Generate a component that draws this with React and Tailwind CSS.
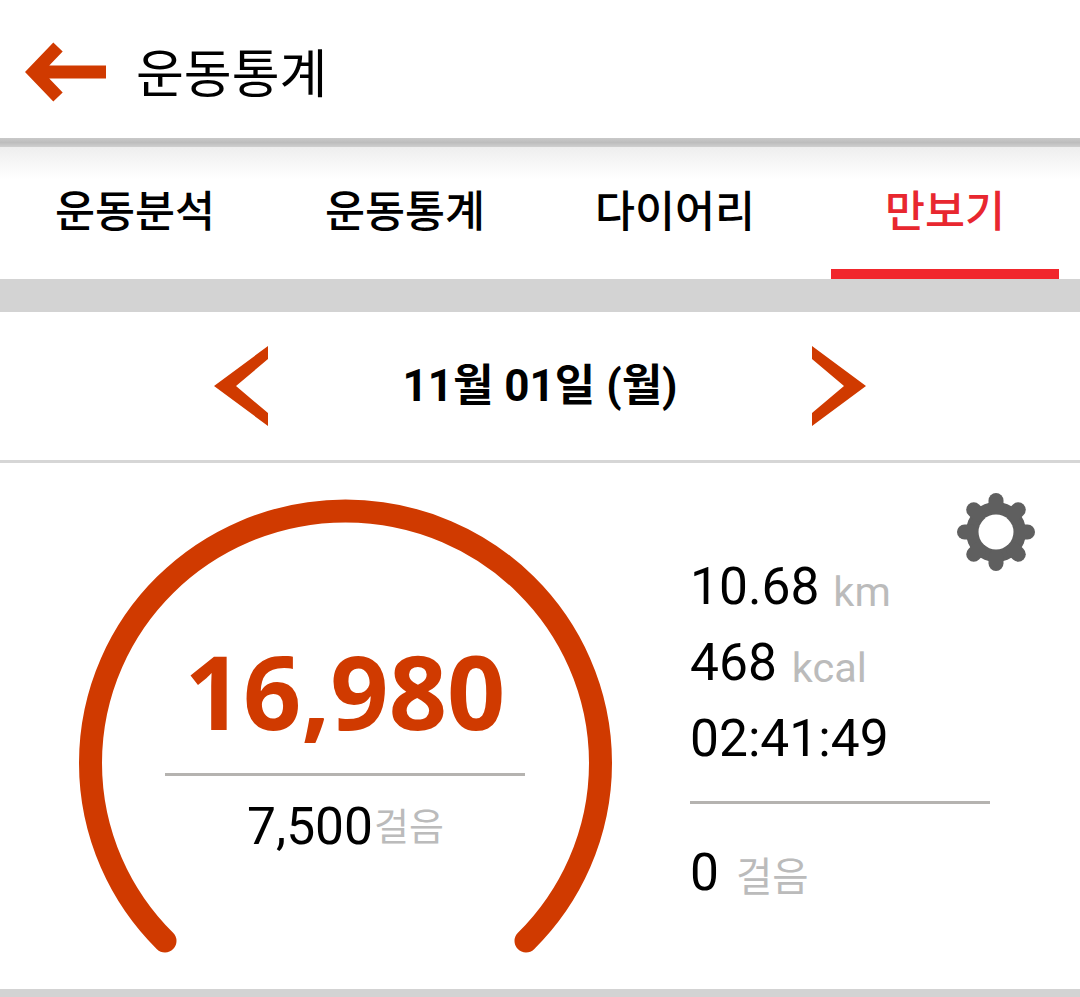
const kr = "font-['Roboto','Noto_Sans_CJK_KR',sans-serif]";

function BackArrow() {
  return (
    <svg width="84" height="62" viewBox="0 0 84 62" className="shrink-0 mt-[5px]">
      <path d="M33 6 L9 31 L33 56 M9 31 H81" fill="none" stroke="#d03a00" strokeWidth="13" strokeLinejoin="miter" />
    </svg>
  );
}

function Chevron({ dir }) {
  return (
    <svg width="54" height="80" viewBox="0 0 54 80" className="shrink-0">
      {dir === "left" ? (
        <polygon points="54,0 0,40 54,80 54,67 22,40 54,13" fill="#d03a00" />
      ) : (
        <polygon points="0,0 54,40 0,80 0,67 32,40 0,13" fill="#d03a00" />
      )}
    </svg>
  );
}

function Gear() {
  const angles = [0, 45, 90, 135, 180, 225, 270, 315];
  return (
    <svg width="80" height="80" viewBox="-40 -40 80 80">
      <circle r="30" fill="#5f5f5f" />
      {angles.map((a) => (
        <line key={a} x1="0" y1="-25" x2="0" y2="-31.5" stroke="#5f5f5f" strokeWidth="15" strokeLinecap="round" transform={`rotate(${a})`} />
      ))}
      <circle r="17.5" fill="#ffffff" />
    </svg>
  );
}

function Tab({ label, active }) {
  return (
    <div className="relative flex h-full items-center justify-center">
      <span className={`text-[43.5px] leading-none font-medium ${active ? "text-[#e8272f]" : "text-black"}`}>{label}</span>
      {active && <div className="absolute bottom-0 left-[21px] right-[21px] h-[10px] bg-[#f1262c]" />}
    </div>
  );
}

function Stat({ value, unit, gap, size }) {
  return (
    <div className="flex h-[76px] items-center pt-[2px]">
      <span className="text-[51.5px] leading-none text-black">{value}</span>
      {unit && <span className={`leading-none text-[#bbbbbb] mt-[10px] ${size} ${gap}`}>{unit}</span>}
    </div>
  );
}

export default function App() {
  return (
    <div className={`h-[997px] w-[1080px] overflow-hidden bg-white ${kr}`}>
      <header className="flex h-[138px] items-center pl-[25px]">
        <BackArrow />
        <h1 className="ml-[27px] mt-[14px] text-[52px] leading-none font-normal text-black">운동통계</h1>
      </header>
      <div className="h-[9px] bg-[linear-gradient(#c9c9c9,#bdbdbd_50%,#cfcfcf)]" />
      <nav className="grid h-[132px] grid-cols-4 bg-[linear-gradient(#eeeeee,#ffffff_32px)]">
        <Tab label="운동분석" />
        <Tab label="운동통계" />
        <Tab label="다이어리" />
        <Tab label="만보기" active />
      </nav>
      <div className="h-[33px] bg-[#d3d3d3]" />
      <div className="flex h-[148px] items-center justify-center">
        <Chevron dir="left" />
        <div className="w-[544px] text-center text-[44px] leading-none font-bold text-black">11월 01일 (월)</div>
        <Chevron dir="right" />
      </div>
      <div className="h-[3px] bg-[#d6d6d6]" />
      <main className="flex h-[526px]">
        <section className="relative flex w-[690px] flex-col items-center pt-[176px]">
          <svg width="690" height="526" viewBox="0 0 690 526" className="absolute left-0 top-0">
            <path d="M165 478 A 255 252 0 1 1 526 478" fill="none" stroke="#d03a00" strokeWidth="23" strokeLinecap="round" />
          </svg>
          <div className="font-['Noto_Sans',sans-serif] text-[102px] leading-[103px] font-bold text-[#d03a00]">16,980</div>
          <div className="mt-[31px] h-[3px] w-[360px] bg-[#b5b3b0]" />
          <div className="mt-[25px] ml-[1px] flex items-center">
            <span className="text-[51.5px] leading-none text-black">7,500</span>
            <span className="ml-[1px] text-[38px] leading-none text-[#bbbbbb]">걸음</span>
          </div>
        </section>
        <section className="relative w-[390px] pt-[85px]">
          <div className="absolute right-[44px] top-[29px]">
            <Gear />
          </div>
          <Stat value="10.68" unit="km" gap="ml-[14px]" size="text-[41.5px]" />
          <Stat value="468" unit="kcal" gap="ml-[15px]" size="text-[41.5px]" />
          <Stat value="02:41:49" />
          <div className="mt-[25px] h-[3px] w-[300px] bg-[#b5b3b0]" />
          <div className="mt-[30px]">
            <Stat value="0" unit="걸음" gap="ml-[17px]" size="text-[39.5px]" />
          </div>
        </section>
      </main>
      <div className="h-[8px] bg-[#d3d3d3]" />
    </div>
  );
}
